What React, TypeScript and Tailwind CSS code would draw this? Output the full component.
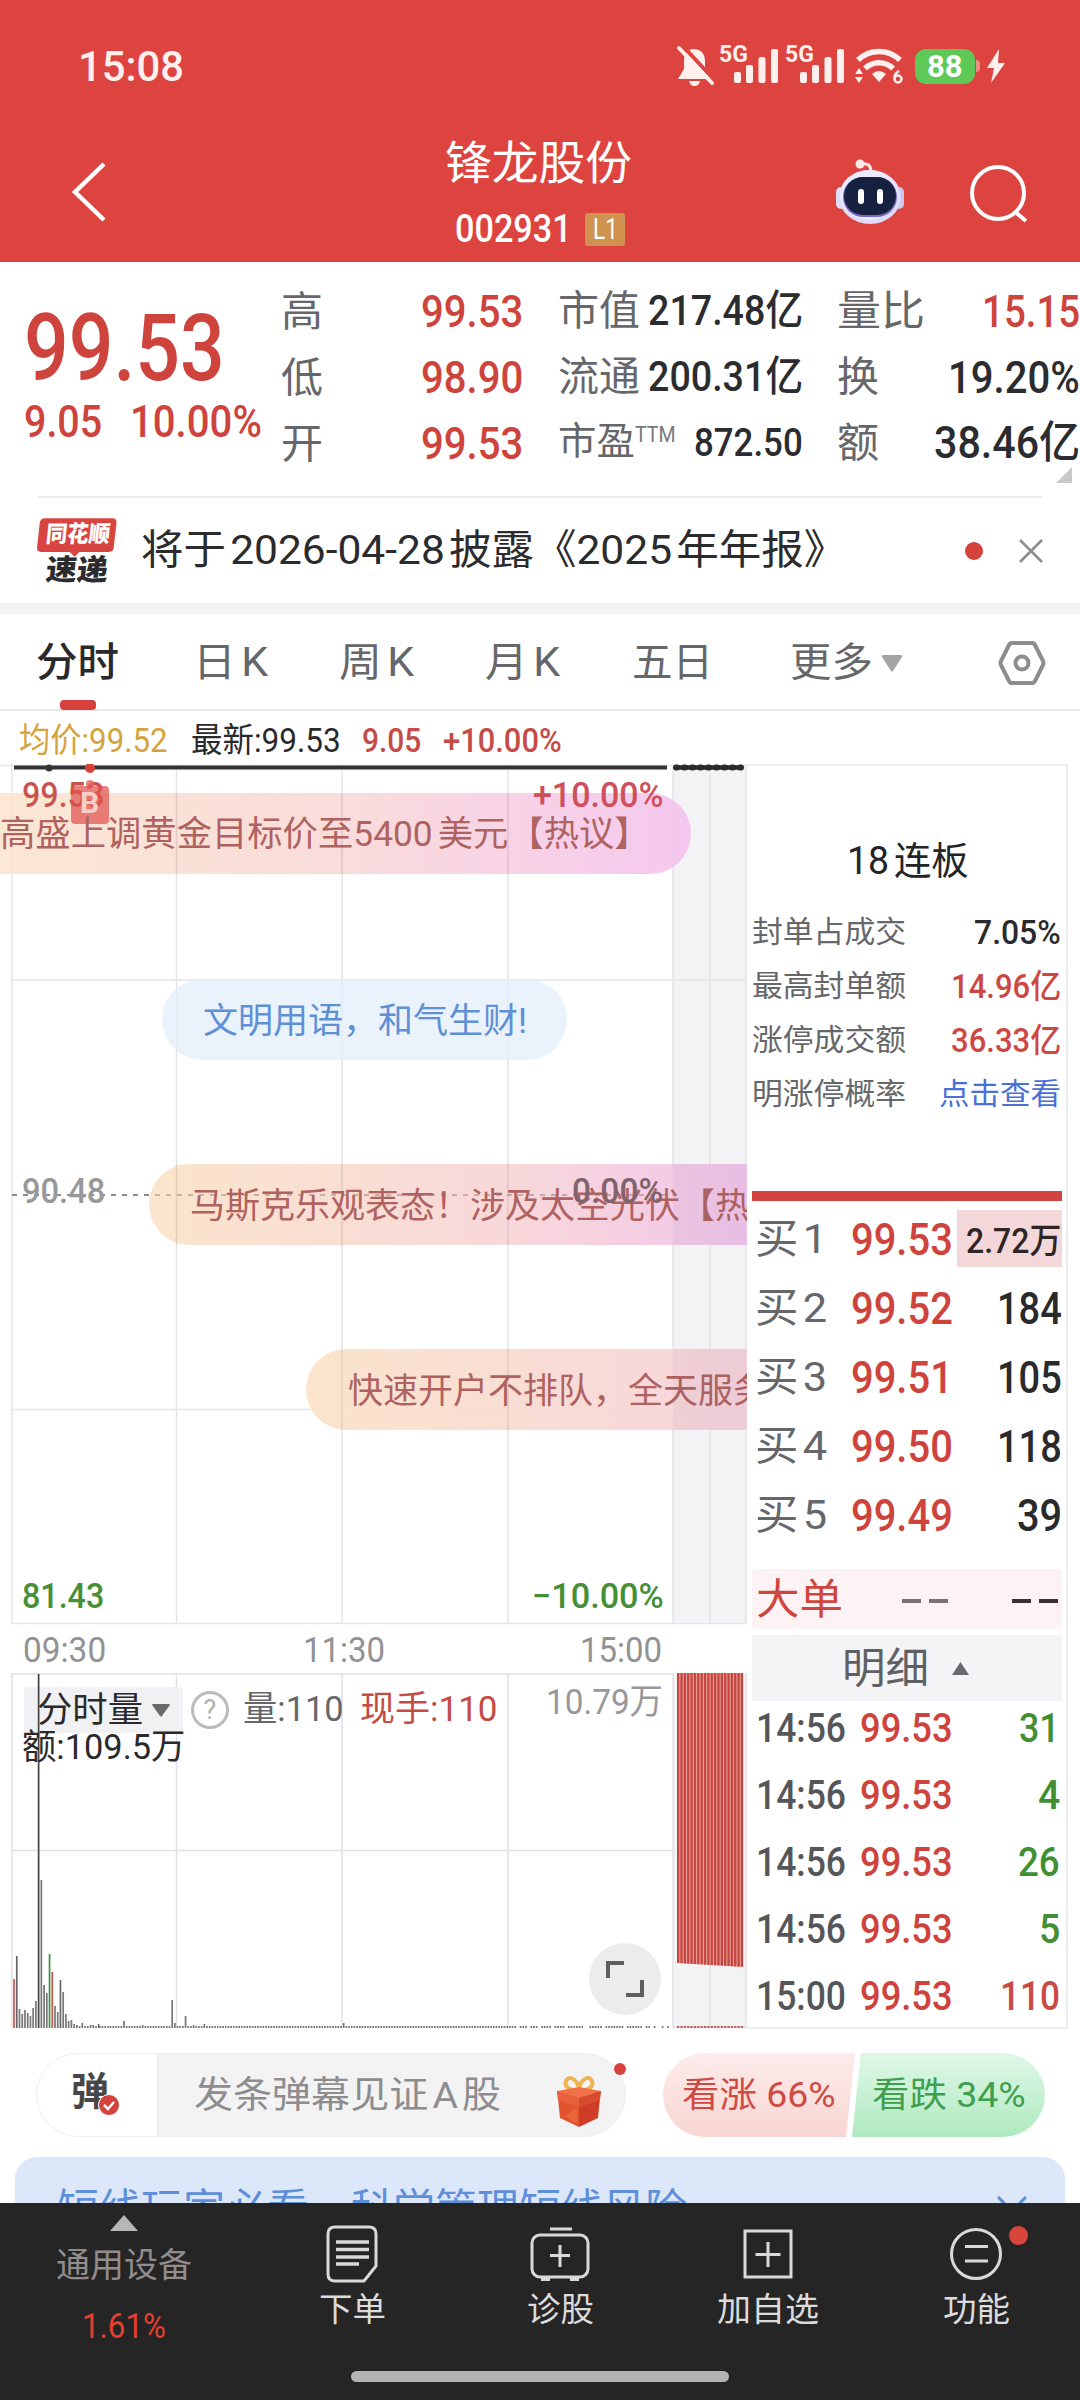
import React, { useLayoutEffect, useRef } from "react";

/** Single-line text squeezed or stretched horizontally to the width of its box. */
function Fit({ className = "", children }: { className?: string; children: React.ReactNode }) {
  const outer = useRef<HTMLSpanElement>(null);
  const inner = useRef<HTMLSpanElement>(null);
  useLayoutEffect(() => {
    if (!outer.current || !inner.current) return;
    const s = outer.current.clientWidth / inner.current.offsetWidth;
    inner.current.style.transform = `scaleX(${s})`;
  }, []);
  return (
    <span ref={outer} className={`block shrink-0 whitespace-nowrap leading-none ${className}`}>
      <span ref={inner} className="inline-block origin-left">
        {children}
      </span>
    </span>
  );
}

const RED = "text-[#cf433d]";

function SignalBars() {
  return (
    <svg className="h-[34px] w-[44px]" viewBox="0 0 44 34" fill="#fff0ee">
      <rect x="0" y="23" width="7" height="11" rx="2" />
      <rect x="12" y="16" width="7" height="18" rx="2" />
      <rect x="24.500" y="8" width="7" height="26" rx="2" />
      <rect x="37" y="0" width="7" height="34" rx="2" />
    </svg>
  );
}

function StatusBar() {
  return (
    <div className="flex h-[132px] items-center text-[#fff0ee]">
      <Fit className="ml-[78px] w-[106px] text-[43px] font-medium">15:08</Fit>
      <svg className="ml-[493px] h-[42px] w-[38px]" viewBox="0 0 38 42">
        <path d="M17 4c7 0 11 5 11 12v8l6 10H1l6-10v-8c0-7 3-12 10-12z" fill="#fff0ee" />
        <path d="M12 36h11c-1 4-3 5-5.500 5S13 40 12 36z" fill="#fff0ee" />
        <path d="M4 -1 38 36" stroke="#dd4440" strokeWidth="4" />
        <path d="M2 3 35 38" stroke="#fff0ee" strokeWidth="4" strokeLinecap="round" />
      </svg>
      <div className="relative ml-[19px] h-[34px] w-[44px]">
        <SignalBars />
        <Fit className="absolute -left-[15px] -top-[6px] w-[29px] text-[23px] font-bold">5G</Fit>
      </div>
      <div className="relative ml-[22px] h-[34px] w-[44px]">
        <SignalBars />
        <Fit className="absolute -left-[15px] -top-[6px] w-[29px] text-[23px] font-bold">5G</Fit>
      </div>
      <svg className="ml-[11px] h-[36px] w-[48px]" viewBox="0 0 48 36" fill="none" stroke="#fff0ee">
        <path d="M3 12a30 30 0 0 1 42 0" strokeWidth="5.500" />
        <path d="M10 20.500a20 20 0 0 1 28 0" strokeWidth="5.500" />
        <path d="M17 26q7-6 14 0l-7 8z" fill="#fff0ee" stroke="none" />
        <path d="M0 26l4-6 4 6zM0 29h8l-4 6z" fill="#fff0ee" stroke="none" />
        <path d="M44 23q-5 3-4.500 7.500" strokeWidth="2.500" />
        <circle cx="43" cy="31" r="3.500" strokeWidth="2.500" />
      </svg>
      <div className="ml-[12px] flex h-[35px] w-[60px] items-center justify-center rounded-[11px] bg-[#5fc957]">
        <Fit className="w-[36px] text-[31px] font-bold text-white">88</Fit>
      </div>
      <div className="ml-px h-[12px] w-[4px] rounded-r-full bg-[#ee8f84]" />
      <svg className="ml-[7px] h-[34px] w-[18px]" viewBox="0 0 18 34" fill="#fff0ee">
        <path d="M12 0 0 19h7L4 34 18 14h-7z" />
      </svg>
    </div>
  );
}

function Robot() {
  return (
    <svg className="h-[66px] w-[70px]" viewBox="0 0 70 66">
      <path d="M26 5q10-2 10 8" fill="none" stroke="#ffe4e6" strokeWidth="3" />
      <circle cx="25" cy="5" r="4.500" fill="#ffe9e8" />
      <rect x="1" y="28" width="10" height="22" rx="5" fill="#dcdcf6" />
      <rect x="59" y="28" width="10" height="22" rx="5" fill="#c9c8f0" />
      <ellipse cx="35" cy="38" rx="31" ry="27" fill="#dedcf8" />
      <ellipse cx="34" cy="36" rx="29" ry="25" fill="#eceafd" />
      <rect x="8" y="18" width="54" height="40" rx="20" fill="#7569c2" />
      <rect x="9" y="18" width="52" height="38" rx="19" fill="#16213f" />
      <rect x="23" y="30" width="6" height="15" rx="3" fill="#fff" />
      <rect x="42" y="30" width="6" height="15" rx="3" fill="#fff" />
    </svg>
  );
}

function Header() {
  return (
    <header className="h-[262px] bg-[#dd4440] text-white">
      <StatusBar />
      <div className="flex h-[130px] items-start">
        <svg className="ml-[70px] mt-[27px] h-[66px] w-[38px]" viewBox="0 0 38 66" fill="none" stroke="#fff" strokeWidth="4.500">
          <path d="M34 5 5 33l29 28" />
        </svg>
        <div className="ml-[336px] w-[190px]">
          <Fit className="ml-px mt-[8px] w-[187px] text-[46px]">锋龙股份</Fit>
          <div className="mt-[23px] flex h-[40px] items-center gap-[13px] pl-[11px]">
            <Fit className="w-[117px] text-[38px] font-medium">002931</Fit>
            <div className="flex h-[33px] w-[40px] items-center justify-center rounded-[3px] bg-[#d0924f]">
              <Fit className="w-[25px] text-[29px]">L1</Fit>
            </div>
          </div>
        </div>
        <div className="ml-[201px] mt-[27px]">
          <Robot />
        </div>
        <svg className="ml-[63px] mt-[31px] h-[62px] w-[62px]" viewBox="0 0 62 62" fill="none" stroke="#fff" strokeWidth="4">
          <circle cx="30" cy="30" r="26" />
          <path d="M46 48 58 58" />
        </svg>
      </div>
    </header>
  );
}

const cellLabel = "text-[41px] text-[#66676a]";
const cellNum = "font-medium text-[44px]";

function QuotePanel() {
  return (
    <section className="relative flex h-[234px] bg-white text-[#2b2c30]">
      <div className={`w-[264px] shrink-0 pl-[24px] pt-[41px] ${RED}`}>
        <Fit className="w-[201px] text-[92px] font-medium">99.53</Fit>
        <div className="mt-[4px] flex gap-[28px]">
          <Fit className="w-[78px] text-[45px] font-medium">9.05</Fit>
          <Fit className="w-[132px] text-[45px] font-medium">10.00%</Fit>
        </div>
      </div>
      <div className="ml-[17px] mt-[17px] w-[242px] shrink-0">
        <div className="flex h-[66px] items-center justify-between">
          <Fit className={`w-[42px] ${cellLabel}`}>高</Fit>
          <Fit className={`w-[102px] ${cellNum} ${RED}`}>99.53</Fit>
        </div>
        <div className="flex h-[66px] items-center justify-between">
          <Fit className={`w-[42px] ${cellLabel}`}>低</Fit>
          <Fit className={`w-[102px] ${cellNum} ${RED}`}>98.90</Fit>
        </div>
        <div className="flex h-[66px] items-center justify-between">
          <Fit className={`w-[42px] ${cellLabel}`}>开</Fit>
          <Fit className={`w-[102px] ${cellNum} ${RED}`}>99.53</Fit>
        </div>
      </div>
      <div className="ml-[35px] mt-[16px] w-[245px] shrink-0">
        <div className="flex h-[66px] items-center justify-between">
          <Fit className={`w-[82px] ${cellLabel}`}>市值</Fit>
          <Fit className="w-[155px] text-[42px] font-medium">217.48亿</Fit>
        </div>
        <div className="flex h-[66px] items-center justify-between">
          <Fit className={`w-[82px] ${cellLabel}`}>流通</Fit>
          <Fit className="w-[155px] text-[42px] font-medium">200.31亿</Fit>
        </div>
        <div className="flex h-[66px] items-center justify-between">
          <div className="-mt-[4px] flex items-start">
            <Fit className="w-[77px] text-[38px] text-[#66676a]">市盈</Fit>
            <Fit className="mt-[2px] w-[41px] text-[22px] text-[#77787a]">TTM</Fit>
          </div>
          <Fit className="w-[109px] text-[39px] font-medium">872.50</Fit>
        </div>
      </div>
      <div className="ml-[34px] mt-[16px] w-[243px] shrink-0">
        <div className="flex h-[66px] items-center justify-between">
          <Fit className={`w-[88px] ${cellLabel}`}>量比</Fit>
          <Fit className={`mt-px w-[98px] ${cellNum} ${RED}`}>15.15</Fit>
        </div>
        <div className="flex h-[66px] items-center justify-between">
          <Fit className={`w-[42px] ${cellLabel}`}>换</Fit>
          <Fit className={`mt-[2px] w-[132px] ${cellNum}`}>19.20%</Fit>
        </div>
        <div className="flex h-[66px] items-center justify-between">
          <Fit className={`w-[42px] ${cellLabel}`}>额</Fit>
          <Fit className={`w-[146px] ${cellNum}`}>38.46亿</Fit>
        </div>
      </div>
      <svg className="absolute bottom-[13px] right-[8px] h-[16px] w-[16px]" viewBox="0 0 16 16">
        <path d="M16 0v16H0z" fill="#c9c9cb" />
      </svg>
    </section>
  );
}

function NewsRow() {
  return (
    <section className="h-[118px] border-b-[11px] border-[#f3f3f4] bg-white">
      <div className="mx-[37px] flex h-[107px] items-center border-t-2 border-[#ededee]">
        <div className="relative h-[68px] w-[83px]">
          <svg className="absolute inset-0 h-full w-full" viewBox="0 0 83 68">
            <path d="M8 0h70q5 0 4.500 5l-3 26q-.5 4-5 4H44l-5 5-5-5H4q-4 0-4-4L3 4q1-4 5-4z" fill="#d8443f" />
          </svg>
          <Fit className="absolute left-[9px] top-[6px] w-[64px] -skew-x-6 text-[23px] font-black text-white">同花顺</Fit>
          <Fit className="absolute left-[9px] top-[39px] w-[62px] -skew-x-6 text-[29px] font-black text-[#2c2c2e]">速递</Fit>
        </div>
        <Fit className="ml-[24px] w-[705px] text-[41px] text-[#2b2b2e]">
          将于<span className="mx-[4px]">2026-04-28</span>披露《2025<span className="ml-[4px]">年年报》</span>
        </Fit>
        <div className="ml-[119px] h-[18px] w-[18px] shrink-0 rounded-full bg-[#d5413b]" />
        <svg className="ml-[36px] h-[24px] w-[24px] shrink-0" viewBox="0 0 24 24" stroke="#8c8c8e" strokeWidth="2.500">
          <path d="M1 1 23 23M23 1 1 23" />
        </svg>
      </div>
    </section>
  );
}

function PeriodTab({ className, period }: { className: string; period: string }) {
  return (
    <Fit className={className}>
      {period}
      <span className="ml-[5px]">K</span>
    </Fit>
  );
}

function Tabs() {
  return (
    <nav className="relative flex h-[97px] items-center border-b-2 border-[#e9e9ea] bg-white pt-[3px] text-[40px] text-[#66676a]">
      <Fit className="ml-[36px] w-[83px] font-medium text-[#2a2a2c]">分时</Fit>
      <PeriodTab className="ml-[74px] w-[75px]" period="日" />
      <PeriodTab className="ml-[71px] w-[75px]" period="周" />
      <PeriodTab className="ml-[71px] w-[75px]" period="月" />
      <Fit className="ml-[72px] w-[81px]">五日</Fit>
      <Fit className="ml-[77px] w-[83px]">更多</Fit>
      <svg className="ml-[8px] h-[17px] w-[22px]" viewBox="0 0 22 17" fill="#a3a3a5">
        <path d="M2 0h18q2 0 1 2L12 16q-1 1-2 0L1 2Q0 0 2 0z" />
      </svg>
      <svg className="ml-[95px] h-[46px] w-[48px]" viewBox="0 0 48 46" fill="none" stroke="#8d8d8f" strokeWidth="4">
        <path d="M14 3h20q2 0 3 2l8 16q1 2 0 4l-8 16q-1 2-3 2H14q-2 0-3-2L3 25q-1-2 0-4l8-16q1-2 3-2z" />
        <circle cx="24" cy="23" r="6.500" />
      </svg>
      <div className="absolute -bottom-px left-[60px] h-[10px] w-[36px] rounded-[4px] bg-[#d8413b]" />
    </nav>
  );
}

const volumeBars: [number, string][] = [
  [49, "#cf5550"], [72, "#666"], [19, "#777"], [14, "#777"], [18, "#777"], [15, "#777"], [12, "#777"], [20, "#777"],
  [27, "#777"], [354, "#444"], [148, "#777"], [43, "#777"], [35, "#777"], [74, "#3f9340"], [56, "#cf5550"], [22, "#777"],
  [16, "#777"], [48, "#666"], [36, "#777"], [14, "#777"], [7, "#777"], [8, "#777"], [4, "#777"], [3, "#777"],
  [2, "#777"], [5, "#777"], [2, "#777"], [2, "#777"], [3, "#777"], [3, "#777"], [2, "#777"], [4, "#777"],
];
const tallBars: Record<number, number> = { 41: 7, 48: 3, 59: 28, 60: 5, 64: 12, 67: 3, 71: 4, 123: 5 };
const idleMinutes = [188, 192, 196, 201, 206, 213, 214, 220, 228, 235, 238, 240, 241, 243];
const range = (n: number) => Array.from({ length: n }, (_, i) => i);

function PriceGrid() {
  return (
    <svg className="absolute inset-0 h-full w-full" viewBox="0 0 747 862">
      <rect x="673" y="2" width="74" height="858" fill="#f3f2f4" />
      <g stroke="#e5e5e8" strokeWidth="1.500">
        <path d="M0 1.500H747M12 216H747M12 645.500H747M12 859.500H747" />
        <path d="M12 0V860M176.500 0V860M342 0V860M508 0V860M673 0V860M710 0V860M746 0V860" />
      </g>
      <path d="M12 431H673" stroke="#8e8e90" strokeWidth="2" strokeDasharray="5 6" />
      <path d="M14 3.500H667" stroke="#343436" strokeWidth="4" />
      <path d="M676 3.500H743" stroke="#2a2a2c" strokeWidth="6" strokeLinecap="round" strokeDasharray="1 7" />
      <path d="M676 3.500H743" stroke="#2a2a2c" strokeWidth="4.500" />
      <circle cx="49" cy="4" r="3.500" fill="#343436" />
      <circle cx="90" cy="4" r="5" fill="#d5413b" />
    </svg>
  );
}

const danmaku = "absolute flex h-[81px] items-center text-[35px] text-[#b06260] whitespace-nowrap";
const axis = "absolute text-[35px] font-medium";

function PriceChart() {
  return (
    <div className="relative h-[862px] overflow-hidden">
      <PriceGrid />
      <Fit className={`${axis} left-[22px] top-[410px] w-[83px] text-[#98989a]`}>90.48</Fit>
      <div className={`${danmaku} left-[-60px] top-[29px] w-[751px] rounded-full bg-linear-to-r from-[#fbe4c6]/80 via-[#f8d3d2]/80 via-55% to-[#f4c2ee]/90 pl-[60px]`} />
      <Fit className={`${axis} left-[22px] top-[14px] w-[82px] text-[#c9544f]`}>99.53</Fit>
      <Fit className={`${axis} left-[533px] top-[14px] w-[131px] text-[#cf4f5c]`}>+10.00%</Fit>
      <svg className="absolute left-[71px] top-[16px] h-[45px] w-[38px]" viewBox="0 0 38 45">
        <circle cx="19" cy="4" r="4" fill="#e0605c" fillOpacity=".8" />
        <rect y="6" width="38" height="38" rx="4" fill="#e0524e" fillOpacity=".72" />
      </svg>
      <span className="absolute left-[80px] top-[24px] text-[30px] font-bold leading-none text-[#f6cfc8]">B</span>
      <Fit className={`${danmaku} left-0 top-[53px] h-[35px]! w-[650px]`}>
        高盛上调黄金目标价至<span className="mr-[5px]">5400</span>美元【热议】
      </Fit>
      <div className="absolute left-[162px] top-[215px] flex h-[81px] w-[405px] items-center rounded-full bg-[#e3edfa]/75 pl-[41px] pt-[3px] text-[35px] text-[#5f90d6]">
        <Fit className="w-[324px]">文明用语，和气生财!</Fit>
      </div>
      <div className={`${danmaku} left-[149px] top-[400px] w-[740px] rounded-full bg-linear-to-r from-[#fae2c6]/90 via-[#f7d3d6]/90 via-50% to-[#efbdec]/90 to-85% pl-[41px] pt-[3px]`}>
        <span className="leading-none">马斯克乐观表态！涉及太空光伏【热议】</span>
      </div>
      <div className={`${danmaku} left-[306px] top-[585px] w-[740px] rounded-full bg-linear-to-r from-[#fae2c6]/90 via-[#f7d3d6]/90 via-50% to-[#efbdec]/90 pl-[42px] pt-[3px]`}>
        <span className="leading-none">快速开户不排队，全天服务在线</span>
      </div>
      <svg className="absolute inset-0 h-full w-full" viewBox="0 0 747 862">
        <path d="M155 431H673" stroke="#8e7078" strokeOpacity=".5" strokeWidth="1.500" strokeDasharray="5 6" />
        <path d="M176.500 400V481M342 400V481M508 400V481M342 29V110M508 29V110M176.500 29V110M342 585V666M508 585V666" stroke="#7a5a60" strokeOpacity=".14" strokeWidth="1.500" />
        <path d="M673 400h73v81h-73zM673 585h73v81h-73z" fill="#6a4a70" fillOpacity=".05" />
      </svg>
      <Fit className={`${axis} left-[572px] top-[410px] w-[91px] text-[#80636d]`}>0.00%</Fit>
      <Fit className={`${axis} left-[22px] top-[815px] w-[82px] text-[#458f37]`}>81.43</Fit>
      <Fit className={`${axis} left-[532px] top-[815px] w-[132px] text-[#458f37]`}>−10.00%</Fit>
    </div>
  );
}

function VolumeChart() {
  return (
    <div className="relative h-[356px]">
      <svg className="absolute inset-0 h-full w-full" viewBox="0 0 747 356">
        <rect x="673" y="1" width="74" height="354" fill="#f4f3f4" />
        <g stroke="#e1e1e4" strokeWidth="1.500">
          <path d="M12 1H673M12 177.500H673M673 354.500H747" />
          <path d="M12 0V355M176.500 0V355M342 0V355M508 0V355M673 0V355M710 0V355M746 0V355" />
        </g>
        <path d="M677 0H743V294L677 290z" fill="#e6a49d" />
        {range(20).map((i) => (
          <rect key={i} x={677 + i * 3.36} y="0" width="2.300" height={290 + i * 0.2} fill="#c6463f" />
        ))}
        <path d="M677 354H744" stroke="#c2605c" strokeWidth="2" strokeDasharray="2.300 1.060" />
      </svg>
      <div className="absolute left-[24px] top-[14px] flex h-[46px] w-[159px] items-center rounded-[3px] bg-[#f1f1f3] pl-[13px] text-[#2a2a2d]">
        <Fit className="w-[106px] text-[35px]">分时量</Fit>
        <svg className="ml-[9px] h-[13px] w-[18px]" viewBox="0 0 18 13" fill="#6a6a6c">
          <path d="M1 0h16q1.500 0 .5 1.500L10 12q-1 1-2 0L.5 1.500Q-.5 0 1 0z" />
        </svg>
      </div>
      <svg className="absolute inset-0 h-full w-full" viewBox="0 0 747 356">
        {volumeBars.map(([h, fill], i) => (
          <rect key={i} x={13.2 + i * 2.73} y={355 - h} width="1.700" height={h} fill={fill} />
        ))}
        {range(213)
          .map((i) => i + 32)
          .filter((n) => !idleMinutes.includes(n))
          .map((n) => {
            const h = tallBars[n] ?? 2;
            return <rect key={n} x={13.2 + n * 2.68} y={355 - h} width="1.700" height={h} fill="#777" />;
          })}
      </svg>
      <div className="absolute left-[191px] top-[18px] flex h-[38px] w-[38px] items-center justify-center rounded-full border-[3px] border-[#bbbbbd] text-[27px] leading-none text-[#b0b0b2]">?</div>
      <Fit className="absolute left-[243px] top-[19px] w-[101px] text-[35px] text-[#66676a]">量:110</Fit>
      <Fit className="absolute left-[360px] top-[19px] w-[138px] text-[35px] text-[#c44a43]">现手:110</Fit>
      <Fit className="absolute left-[546px] top-[12px] w-[117px] text-[35px] text-[#98989a]">10.79万</Fit>
      <Fit className="absolute left-[22px] top-[57px] w-[163px] text-[35px] text-[#2a2a2d]">额:109.5万</Fit>
      <div className="absolute left-[589px] top-[270px] flex h-[72px] w-[72px] items-center justify-center rounded-full bg-[#ececed]">
        <svg className="h-[38px] w-[38px]" viewBox="0 0 38 38" fill="none" stroke="#5e5e60" strokeWidth="4">
          <path d="M2 18V3H18M36 20V35H20" />
        </svg>
      </div>
    </div>
  );
}

const bids = [
  ["2", "99.52", "184"],
  ["3", "99.51", "105"],
  ["4", "99.50", "118"],
];
const ticks = [
  ["14:56", "31", "w-[41px] text-[#418f33]"],
  ["14:56", "4", "w-[22px] text-[#418f33]"],
  ["14:56", "26", "w-[42px] text-[#418f33]"],
  ["14:56", "5", "w-[21px] text-[#418f33]"],
  ["15:00", "110", "w-[60px] text-[#c94b45]"],
];

function BidRow({ level, price, children }: { level: string; price: string; children: React.ReactNode }) {
  return (
    <div className="flex h-[69px] items-center">
      <Fit className="ml-[3px] mt-px w-[72px] text-[41px] text-[#66676a]">
        买<span className="ml-[4px]">{level}</span>
      </Fit>
      <Fit className={`ml-[24px] mt-[2px] w-[102px] text-[45px] font-medium ${RED}`}>{price}</Fit>
      <div className="ml-auto">{children}</div>
    </div>
  );
}

function OrderBook() {
  const statLabel = "text-[30px] text-[#66676a] w-[154px]";
  const statRow = "flex h-[54px] items-center justify-between pr-px";
  return (
    <aside className="h-[1265px] w-[321px] border-2 border-l-0 border-[#ededef] bg-white pl-[5px] pr-[4px]">
      <Fit className="ml-[95px] mt-[76px] w-[122px] text-[38px] text-[#242426]">
        18<span className="ml-[5px]">连板</span>
      </Fit>
      <div className="mt-[25px]">
        <div className={statRow}>
          <Fit className={statLabel}>封单占成交</Fit>
          <Fit className="w-[87px] text-[33px] font-medium text-[#2a2a2d]">7.05%</Fit>
        </div>
        <div className={statRow}>
          <Fit className={statLabel}>最高封单额</Fit>
          <Fit className="w-[110px] text-[33px] font-medium text-[#cd4844]">14.96亿</Fit>
        </div>
        <div className={statRow}>
          <Fit className={statLabel}>涨停成交额</Fit>
          <Fit className="w-[110px] text-[33px] font-medium text-[#cd4844]">36.33亿</Fit>
        </div>
        <div className={statRow}>
          <Fit className={statLabel}>明涨停概率</Fit>
          <Fit className="w-[122px] text-[30px] text-[#4a6fd6]">点击查看</Fit>
        </div>
      </div>
      <div className="mt-[70px] h-[10px] bg-[#d1443f]" />
      <div className="mt-[3px]">
        <BidRow level="1" price="99.53">
          <div className="flex h-[57px] w-[105px] items-center bg-[#f3d7d9] pl-[9px] pt-[6px]">
            <Fit className="w-[95px] text-[35px] font-medium text-[#2f2426]">2.72万</Fit>
          </div>
        </BidRow>
        {bids.map(([level, price, vol]) => (
          <BidRow key={level} level={level} price={price}>
            <Fit className="mt-[2px] w-[65px] text-[45px] font-medium text-[#2a2a2d]">{vol}</Fit>
          </BidRow>
        ))}
        <BidRow level="5" price="99.49">
          <Fit className="mt-[2px] w-[45px] text-[45px] font-medium text-[#2a2a2d]">39</Fit>
        </BidRow>
      </div>
      <div className="mt-[20px] flex h-[60px] items-center rounded-[4px] bg-[#fdf3f4]">
        <Fit className="ml-[4px] mt-[2px] w-[87px] text-[42px] text-[#cf453f]">大单</Fit>
        <div className="ml-[59px] mt-[4px] flex gap-[8px]">
          <div className="h-[4px] w-[19px] bg-[#7b7072]" />
          <div className="h-[4px] w-[19px] bg-[#7b7072]" />
        </div>
        <div className="ml-[64px] mt-[4px] flex gap-[8px]">
          <div className="h-[4px] w-[19px] bg-[#3b2f31]" />
          <div className="h-[4px] w-[19px] bg-[#3b2f31]" />
        </div>
      </div>
      <div className="mt-[6px] flex h-[66px] items-center bg-[#f4f3f6]">
        <Fit className="ml-[90px] mt-[2px] w-[87px] text-[42px] text-[#5f6063]">明细</Fit>
        <svg className="ml-[23px] h-[13px] w-[17px]" viewBox="0 0 17 13" fill="#68696c">
          <path d="M8.500 0 17 13H0z" />
        </svg>
      </div>
      <div className="-mt-[6px]">
        {ticks.map(([time, vol, cls], i) => (
          <div key={i} className="flex h-[67px] items-center">
            <Fit className="ml-[4px] w-[90px] text-[41px] font-medium text-[#55565a]">{time}</Fit>
            <Fit className={`ml-[14px] w-[93px] text-[41px] font-medium ${RED}`}>99.53</Fit>
            <Fit className={`ml-auto mr-[2px] text-[41px] font-medium ${cls}`}>{vol}</Fit>
          </div>
        ))}
      </div>
    </aside>
  );
}

function Gift() {
  return (
    <svg className="h-[52px] w-[46px]" viewBox="0 0 46 52">
      <path d="M23 14C13 15 8 10 10 5s10-4 13 7c3-11 11-12 13-7s-3 10-13 9z" fill="none" stroke="#efb44e" strokeWidth="4" />
      <path d="M2 22 23 30v21L4 42z" fill="#e4532f" />
      <path d="M23 30 44 22l-2 20-19 9z" fill="#cf3d26" />
      <path d="M1 15 23 11l22 4-1 8-21 8-21-8z" fill="#f0714c" />
      <path d="M1 15 23 22v9L2 24z" fill="#e85f3b" />
      <path d="M45 15 23 22v9l21-8z" fill="#d84a2e" />
      <path d="M9 40 21 32v16z" fill="#f07a43" opacity=".5" />
    </svg>
  );
}

function DanmakuBar() {
  return (
    <section className="flex h-[85px] bg-white">
      <div className="relative ml-[36px] flex h-[84px] w-[590px] items-center rounded-full border border-[#ededee] bg-linear-to-r from-white from-[121px] to-[#f4f3f4] to-[121px]">
        <div className="relative ml-[34px] h-[42px] w-[50px]">
          <Fit className="-mt-px w-[38px] text-[39px] font-bold text-[#47474a]">弹</Fit>
          <svg className="absolute left-[27px] top-[20px] h-[22px] w-[22px]" viewBox="0 0 22 22">
            <circle cx="11" cy="11" r="10.500" fill="#d6423c" stroke="#fff" />
            <path d="M6 11l4 4 6-7" fill="none" stroke="#fff" strokeWidth="2.500" />
          </svg>
        </div>
        <div className="ml-[36px] h-full w-px bg-[#e6e6e8]" />
        <Fit className="ml-[36px] w-[307px] text-[37px] text-[#8d8d90]">
          发条弹幕见证<span className="mx-[4px]">A</span>股
        </Fit>
        <div className="ml-[55px] mt-[13px]">
          <Gift />
        </div>
        <div className="absolute left-[577px] top-[9px] h-[12px] w-[12px] rounded-full bg-[#d5443f]" />
      </div>
      <div className="relative ml-[37px] flex h-[84px] w-[382px] items-center">
        <svg className="absolute inset-0 h-full w-full" viewBox="0 0 382 84">
          <defs>
            <linearGradient id="up" x1="0" y1="0" x2="0" y2="1">
              <stop offset="0" stopColor="#fdecea" />
              <stop offset="1" stopColor="#f8d5d2" />
            </linearGradient>
            <linearGradient id="down" x1="0" y1="0" x2="0" y2="1">
              <stop offset="0" stopColor="#dff8e7" />
              <stop offset="1" stopColor="#afe9c0" />
            </linearGradient>
          </defs>
          <path d="M42 0H192L183 84H42A42 42 0 0 1 42 0z" fill="url(#up)" />
          <path d="M198 0H340A42 42 0 0 1 340 84H189z" fill="url(#down)" />
        </svg>
        <Fit className="relative ml-[19px] w-[154px] text-[35px] text-[#cf4a44]">看涨 66%</Fit>
        <Fit className="relative ml-[36px] w-[154px] text-[35px] text-[#3f9f4f]">看跌 34%</Fit>
      </div>
    </section>
  );
}

function NavItem({ className, label, labelClass, children }: { className: string; label: string; labelClass: string; children: React.ReactNode }) {
  return (
    <div className={`flex shrink-0 flex-col items-center ${className}`}>
      <div className="mt-[20px] flex h-[62px] items-center">{children}</div>
      <Fit className={`mt-[8px] text-[33px] text-[#dcdcdd] ${labelClass}`}>{label}</Fit>
    </div>
  );
}

function BottomNav() {
  const ic = "fill-none stroke-[#d9d9da] stroke-3";
  return (
    <footer className="relative h-[197px] bg-[#252525]">
      <div className="flex">
        <div className="ml-[50px] flex w-[148px] shrink-0 flex-col items-center">
          <svg className="mt-[12px] h-[16px] w-[28px]" viewBox="0 0 28 16" fill="#b7b7b8">
            <path d="M14 0 28 16H0z" />
          </svg>
          <Fit className="mt-[17px] w-[136px] text-[34px] text-[#928d8c]">通用设备</Fit>
          <Fit className="mt-[27px] w-[84px] text-[35px] text-[#e5402f]">1.61%</Fit>
        </div>
        <NavItem className="ml-[104px] w-[100px]" label="下单" labelClass="w-[67px]">
          <svg className={`h-[58px] w-[52px] ${ic}`} viewBox="0 0 52 58">
            <path d="M9 2h34q7 0 7 7v32L38 56H9q-7 0-7-7V9q0-7 7-7z" />
            <path d="M10 17h33M10 24.500h33M10 32h33M10 39h23" strokeWidth="3.500" />
          </svg>
        </NavItem>
        <NavItem className="ml-[108px] w-[100px]" label="诊股" labelClass="w-[67px]">
          <svg className={`h-[54px] w-[60px] ${ic}`} viewBox="0 0 60 54">
            <rect x="2" y="8" width="56" height="42" rx="8" />
            <path d="M20 2h22M30 18v22M20 28.500h20" />
            <path d="M11 52h9M40 52h9" strokeWidth="4" />
          </svg>
        </NavItem>
        <NavItem className="ml-[98px] w-[120px]" label="加自选" labelClass="w-[102px]">
          <svg className={`h-[50px] w-[50px] ${ic}`} viewBox="0 0 50 50">
            <rect x="2" y="2" width="46" height="46" />
            <path d="M25 13v25M12.500 25.500h25" />
          </svg>
        </NavItem>
        <NavItem className="ml-[98px] w-[100px]" label="功能" labelClass="w-[67px]">
          <div className="relative">
            <svg className={`h-[54px] w-[54px] ${ic}`} viewBox="0 0 54 54">
              <circle cx="27" cy="27" r="24.500" />
              <path d="M16 19.500h23M16 34h23" />
            </svg>
            <div className="absolute -top-px left-[60px] h-[19px] w-[19px] rounded-full bg-[#d8453b]" />
          </div>
        </NavItem>
      </div>
      <div className="absolute left-[351px] top-[168px] h-[11px] w-[378px] rounded-full bg-[#b3b3b3]" />
    </footer>
  );
}

export default function App() {
  return (
    <div className="h-[2400px] w-[1080px] overflow-hidden bg-white font-['Roboto','Noto_Sans_CJK_SC',sans-serif]">
      <Header />
      <QuotePanel />
      <NewsRow />
      <Tabs />
      <div className="flex h-[53px] items-center bg-white pt-[4px] text-[34px]">
        <Fit className="ml-[19px] w-[149px] text-[#d5a33d]">均价:99.52</Fit>
        <Fit className="ml-[23px] w-[150px] text-[#2a2a2d]">最新:99.53</Fit>
        <Fit className="ml-[21px] w-[59px] font-medium text-[#c44b46]">9.05</Fit>
        <Fit className="ml-[22px] w-[119px] font-medium text-[#c44b46]">+10.00%</Fit>
      </div>
      <div className="flex h-[1289px] bg-white">
        <div className="w-[747px] shrink-0 overflow-hidden">
          <PriceChart />
          <div className="flex h-[47px] items-center pt-px text-[35px] text-[#929294]">
            <Fit className="ml-[23px] w-[83px]">09:30</Fit>
            <Fit className="ml-[197px] w-[82px]">11:30</Fit>
            <Fit className="ml-[195px] w-[82px]">15:00</Fit>
          </div>
          <VolumeChart />
        </div>
        <OrderBook />
      </div>
      <DanmakuBar />
      <div className="mx-[15px] mt-[19px] flex h-[46px] items-start overflow-hidden rounded-t-[22px] bg-[#dce7fa]">
        <Fit className="ml-[42px] mt-[32px] w-[630px] text-[42px] text-[#5f8fd8]">短线玩家必看，科学管理短线风险</Fit>
        <svg className="ml-[310px] mt-[39px] h-[30px] w-[30px] shrink-0" viewBox="0 0 30 30" stroke="#5f8fd8" strokeWidth="3">
          <path d="M1 1 29 29M29 1 1 29" />
        </svg>
      </div>
      <BottomNav />
    </div>
  );
}
